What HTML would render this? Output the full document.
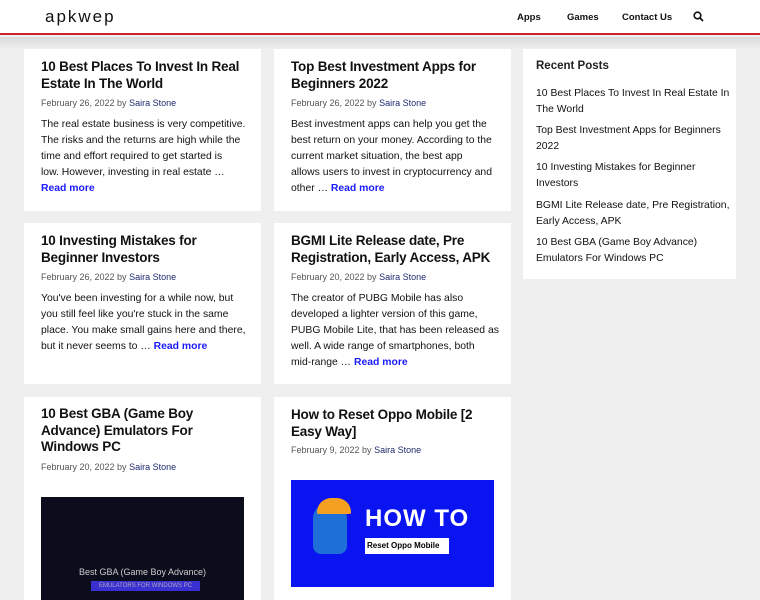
<!DOCTYPE html>
<html><head><style>
*{margin:0;padding:0;box-sizing:border-box}
body{width:760px;height:600px;overflow:hidden;background:#efefef;font-family:"Liberation Sans",sans-serif;color:#222;position:relative}
.hdr{position:absolute;left:0;top:0;width:760px;height:35px;background:#fff;border-bottom:2px solid #d0202a}
.logo{position:absolute;left:45px;top:7px;font-size:17px;letter-spacing:2px;color:#111}
.nav{position:absolute;top:12px;font-size:9.5px;font-weight:bold;color:#111}
.shade{position:absolute;left:0;top:37px;width:760px;height:12px;background:linear-gradient(#d8d8d8,#efefef)}
.card{position:absolute;background:#fff}
.card h2{position:absolute;left:17px;width:230px;white-space:nowrap;font-size:13.5px;line-height:16.5px;font-weight:bold;color:#111;letter-spacing:-0.2px}
.meta{position:absolute;left:17px;font-size:9px;color:#555}
.meta b{font-weight:normal;color:#1e2b6e}
.txt{position:absolute;left:17px;white-space:nowrap;font-size:10.4px;line-height:16px;color:#111}
.txt a{color:#1a1aff;font-weight:bold;text-decoration:none}
.side{position:absolute;left:523px;top:49px;width:213px;height:230px;background:#fff}
.side h3{position:absolute;left:13px;top:11px;font-size:11.5px;font-weight:bold}
.side p{position:absolute;left:13px;white-space:nowrap;font-size:10.4px;line-height:16px;color:#111}
</style></head><body>
<div class="hdr"><div class="logo">apkwep</div>
<div class="nav" style="left:517px">Apps</div><div class="nav" style="left:567px">Games</div><div class="nav" style="left:622px">Contact Us</div>
<svg style="position:absolute;left:693px;top:11px" width="11" height="11" viewBox="0 0 11 11"><circle cx="4.5" cy="4.5" r="3.3" fill="none" stroke="#111" stroke-width="1.6"/><path d="M7 7L10 10" stroke="#111" stroke-width="1.8"/></svg></div>
<div class="shade"></div>

<div class="card" style="left:24px;top:49px;width:237px;height:162px">
<h2 style="top:10px">10 Best Places To Invest In Real<br>Estate In The World</h2>
<div class="meta" style="top:49px">February 26, 2022 by <b>Saira Stone</b></div>
<div class="txt" style="top:68px">The real estate business is very competitive.<br>The risks and the returns are high while the<br>time and effort required to get started is<br>low. However, investing in real estate …<br><a>Read more</a></div></div>

<div class="card" style="left:274px;top:49px;width:237px;height:162px">
<h2 style="top:10px">Top Best Investment Apps for<br>Beginners 2022</h2>
<div class="meta" style="top:49px">February 26, 2022 by <b>Saira Stone</b></div>
<div class="txt" style="top:68px">Best investment apps can help you get the<br>best return on your money. According to the<br>current market situation, the best app<br>allows users to invest in cryptocurrency and<br>other … <a>Read more</a></div></div>

<div class="card" style="left:24px;top:223px;width:237px;height:161px">
<h2 style="top:10px">10 Investing Mistakes for<br>Beginner Investors</h2>
<div class="meta" style="top:49px">February 26, 2022 by <b>Saira Stone</b></div>
<div class="txt" style="top:68px">You've been investing for a while now, but<br>you still feel like you're stuck in the same<br>place. You make small gains here and there,<br>but it never seems to … <a>Read more</a></div></div>

<div class="card" style="left:274px;top:223px;width:237px;height:161px">
<h2 style="top:10px">BGMI Lite Release date, Pre<br>Registration, Early Access, APK</h2>
<div class="meta" style="top:49px">February 20, 2022 by <b>Saira Stone</b></div>
<div class="txt" style="top:68px">The creator of PUBG Mobile has also<br>developed a lighter version of this game,<br>PUBG Mobile Lite, that has been released as<br>well. A wide range of smartphones, both<br>mid-range … <a>Read more</a></div></div>

<div class="card" style="left:24px;top:397px;width:237px;height:203px">
<h2 style="top:9px">10 Best GBA (Game Boy<br>Advance) Emulators For<br>Windows PC</h2>
<div class="meta" style="top:65px">February 20, 2022 by <b>Saira Stone</b></div>
<div style="position:absolute;left:17px;top:100px;width:203px;height:103px;background:#0b0c1c">
<div style="position:absolute;left:0;top:70px;width:203px;text-align:center;font-size:9px;color:#ccc">Best GBA (Game Boy Advance)</div>
<div style="position:absolute;left:50px;top:84px;width:109px;height:10px;background:#3a2fd0;font-size:6px;color:#aab;text-align:center;line-height:10px">EMULATORS FOR WINDOWS PC</div></div></div>

<div class="card" style="left:274px;top:397px;width:237px;height:203px">
<h2 style="top:10px">How to Reset Oppo Mobile [2<br>Easy Way]</h2>
<div class="meta" style="top:48px">February 9, 2022 by <b>Saira Stone</b></div>
<div style="position:absolute;left:17px;top:83px;width:203px;height:107px;background:#0a14f0">
<div style="position:absolute;left:22px;top:24px;width:34px;height:50px;background:#1e6fd8;border-radius:14px 14px 8px 8px"></div>
<div style="position:absolute;left:26px;top:18px;width:34px;height:16px;background:#f5a020;border-radius:16px 16px 2px 2px"></div>
<div style="position:absolute;left:74px;top:25px;font-size:24px;font-weight:bold;color:#fff;letter-spacing:1px">HOW TO</div>
<div style="position:absolute;left:74px;top:58px;width:84px;height:16px;background:#fff;font-size:8px;font-weight:bold;color:#000;line-height:16px;padding-left:2px">Reset Oppo Mobile</div></div></div>

<div class="side"><h3>Recent Posts</h3>
<p style="top:37px">10 Best Places To Invest In Real Estate In<br>The World</p>
<p style="top:74px">Top Best Investment Apps for Beginners<br>2022</p>
<p style="top:111px">10 Investing Mistakes for Beginner<br>Investors</p>
<p style="top:149px">BGMI Lite Release date, Pre Registration,<br>Early Access, APK</p>
<p style="top:186px">10 Best GBA (Game Boy Advance)<br>Emulators For Windows PC</p></div>
</body></html>
